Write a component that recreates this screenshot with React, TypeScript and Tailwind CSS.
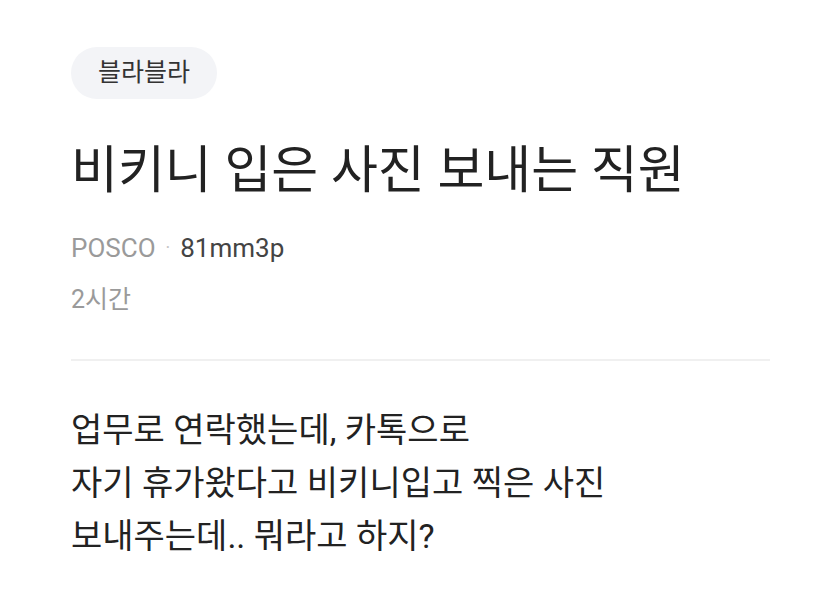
export default function App() {
  return (
    <div
      className="w-[840px] h-[600px] bg-white overflow-hidden"
      style={{ fontFamily: 'Roboto, "Noto Sans CJK KR", sans-serif' }}
    >
      <div className="pl-[71px] pr-[70px] pt-[47px]">
        <div className="inline-flex h-[52px] items-center rounded-full bg-[#f3f4f7] px-[27px] text-[25px] text-[#333]">
          블라블라
        </div>
        <h1 className="mt-[42px] text-[51px] leading-[60px] text-[#222]">
          비키니 입은 사진 보내는 직원
        </h1>
        <div className="mt-[32px] flex items-center text-[26px] leading-[30px]">
          <span className="text-[#9a9a9a]">POSCO</span>
          <span className="mx-[10px] text-[#c4c4c4] text-[18px]">·</span>
          <span className="text-[#444]">81mm3p</span>
        </div>
        <div className="mt-[22px] text-[25px] leading-[30px] text-[#9a9a9a]">2시간</div>
        <div className="mt-[44px] h-[2px] bg-[#f0f0f0]" />
        <div className="mt-[43px] text-[34px] leading-[53px] text-[#222]">
          <p>업무로 연락했는데, 카톡으로</p>
          <p>자기 휴가왔다고 비키니입고 찍은 사진</p>
          <p>보내주는데.. 뭐라고 하지?</p>
        </div>
      </div>
    </div>
  );
}
